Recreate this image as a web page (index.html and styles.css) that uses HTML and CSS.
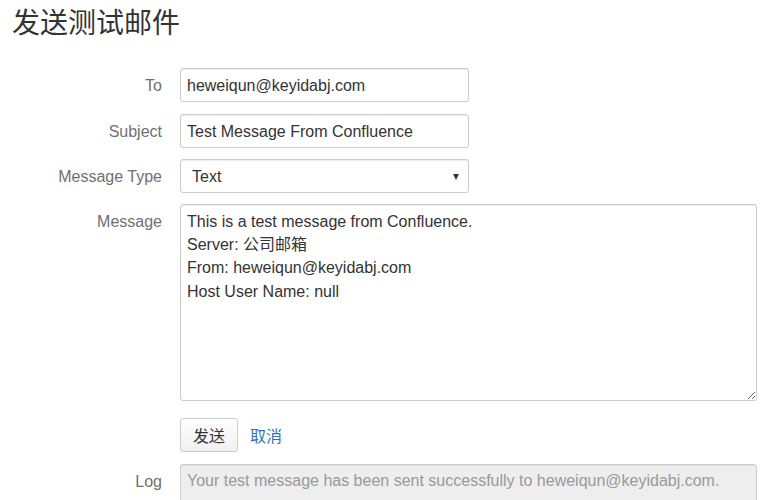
FILE: index.html
```html
<!DOCTYPE html>
<html lang="zh">
<head>
<meta charset="utf-8">
<title>发送测试邮件</title>
<link rel="stylesheet" href="styles.css">
</head>
<body>
<h1 class="title">发送测试邮件</h1>
<form class="form">
  <label class="label" for="to">To</label>
  <div class="field"><input id="to" class="control short" type="text" value="heweiqun@keyidabj.com"></div>

  <label class="label shift1" for="subject">Subject</label>
  <div class="field shift1"><input id="subject" class="control short" type="text" value="Test Message From Confluence"></div>

  <label class="label" for="type">Message Type</label>
  <div class="field"><div class="select-wrap"><select id="type" class="control select"><option>Text</option></select></div></div>

  <label class="label" for="msg">Message</label>
  <div class="field"><textarea id="msg" class="control area">This is a test message from Confluence.
Server: 公司邮箱
From: heweiqun@keyidabj.com
Host User Name: null</textarea></div>

  <div class="label spacer"></div>
  <div class="field actions"><button type="button" class="btn">发送</button><a class="cancel" href="#">取消</a></div>

  <label class="label shift1" for="log">Log</label>
  <div class="field shift1"><div id="log" class="control log">Your test message has been sent successfully to heweiqun@keyidabj.com.</div></div>
</form>
</body>
</html>
```
FILE: styles.css
```css
html, body {
  margin: 0;
  padding: 0;
  background: #fff;
}
body {
  padding: 0 11px 0 12px;
  font-family: "Liberation Sans", Arial, "Noto Sans CJK SC", sans-serif;
  font-size: 16px;
  color: #333;
}
.title {
  margin: 8px 0 29px;
  font-size: 28px;
  font-weight: normal;
  line-height: 31px;
  color: #333;
  font-family: "Liberation Sans", "Noto Sans CJK SC", sans-serif;
}
.form {
  display: grid;
  grid-template-columns: 150px 1fr;
  column-gap: 18px;
  row-gap: 11px;
}
.shift1 {
  margin-top: 1px;
}
.label {
  text-align: right;
  color: #707070;
  line-height: 35px;
  height: 34px;
}
.control {
  box-sizing: border-box;
  font-family: "Liberation Sans", Arial, "Noto Sans CJK SC", sans-serif;
  font-size: 16px;
  color: #333;
  border: 1px solid #ccc;
  border-radius: 3px;
  background: #fff;
  box-shadow: inset 0 1px 1px rgba(0,0,0,0.075);
  padding: 6px 6px 5px;
  height: 34px;
  line-height: 22px;
  display: block;
  margin: 0;
}
.short {
  width: 289px;
}
.select-wrap {
  position: relative;
  width: 289px;
}
.select {
  width: 289px;
  appearance: none;
  -webkit-appearance: none;
  padding-left: 11px;
}
.select-wrap::after {
  content: "";
  position: absolute;
  right: 10px;
  top: 15px;
  border-left: 3.5px solid transparent;
  border-right: 3.5px solid transparent;
  border-top: 6px solid #333;
  pointer-events: none;
}
.area {
  width: 100%;
  height: 197px;
  padding: 5px 6px;
  line-height: 23.2px;
  resize: both;
}
.actions {
  display: flex;
  align-items: center;
  gap: 12px;
  margin-top: 6px;
}
.spacer {
  margin-top: 6px;
}
.btn {
  box-sizing: border-box;
  height: 34px;
  padding: 0 12px;
  font-family: "Liberation Sans", "Noto Sans CJK SC", sans-serif;
  font-size: 16px;
  color: #333;
  background: linear-gradient(#fff, #f0f0f0);
  border: 1px solid #ccc;
  border-radius: 3px;
}
.cancel {
  color: #3572b0;
  text-decoration: none;
  font-family: "Liberation Sans", "Noto Sans CJK SC", sans-serif;
}
.log {
  width: 100%;
  height: 40px;
  background: #eee;
  color: #999;
  padding: 5px 6px;
  white-space: nowrap;
  overflow: hidden;
}
```
